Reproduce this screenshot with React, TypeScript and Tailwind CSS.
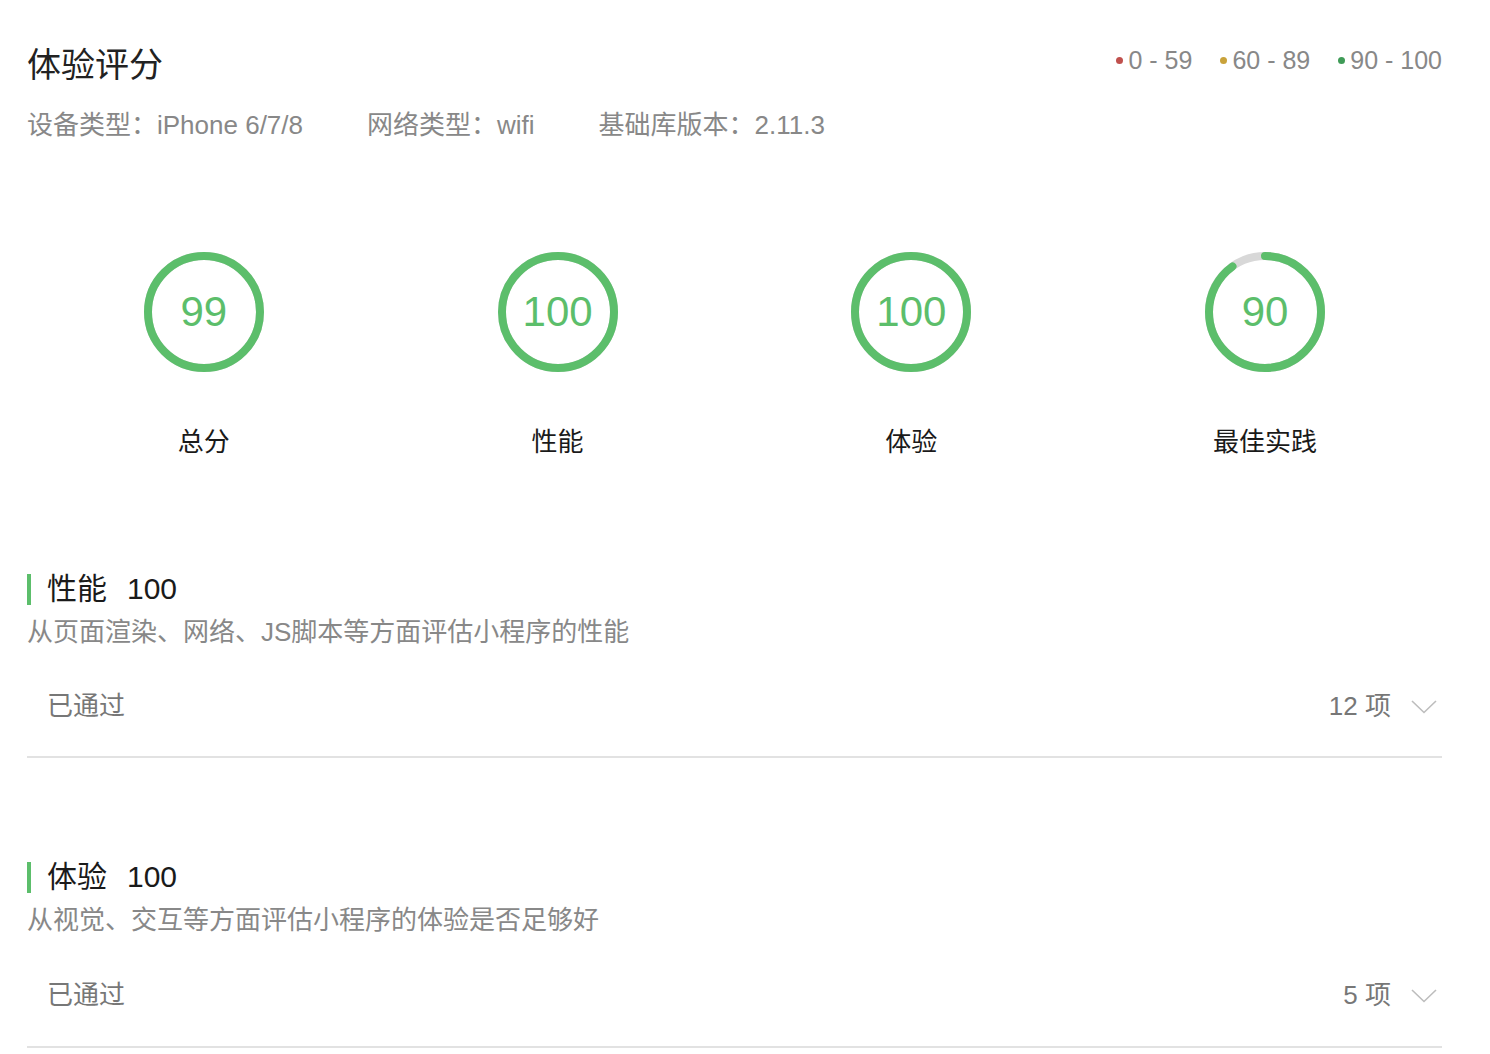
import React from "react";

const FONT = "font-['Liberation_Sans','Noto_Sans_CJK_SC',sans-serif]";

function Ring({ score }: { score: number }) {
  const r = 56;
  const c = 2 * Math.PI * r;
  const len = (score / 100) * c;
  return (
    <div className="relative h-[120px] w-[120px]">
      <svg width="120" height="120" viewBox="0 0 120 120" className="absolute inset-0">
        <circle cx="60" cy="60" r={r} fill="none" stroke="#d8d8d8" strokeWidth="8" />
        <circle
          cx="60"
          cy="60"
          r={r}
          fill="none"
          stroke="#5cbe6b"
          strokeWidth="8"
          strokeLinecap={score >= 99 ? "butt" : "round"}
          strokeDasharray={score >= 99 ? undefined : `${len} ${c}`}
          transform="rotate(-90 60 60)"
        />
      </svg>
      <div className="absolute inset-0 flex items-center justify-center text-[42px] leading-none text-[#5cbe6b]">
        {score}
      </div>
    </div>
  );
}

function Section({
  name,
  score,
  desc,
  count,
  className,
  rowClass,
}: {
  name: string;
  score: number;
  desc: string;
  count: string;
  className: string;
  rowClass: string;
}) {
  return (
    <div className={className}>
      <div className="flex items-center">
        <span className="h-[31px] w-[4px] bg-[#5cbe6b]" />
        <span className="ml-[16px] text-[30px] leading-[32px] text-[#1a1a1a]">
          {name}
          <span className="ml-[20px]">{score}</span>
        </span>
      </div>
      <p className="mt-[9px] text-[26px] leading-[36px] text-[#888]">{desc}</p>
      <div
        className={`flex items-center justify-between border-b-2 border-[#e2e2e2] pl-[20px] pr-[5px] pt-[6px] ${rowClass}`}
      >
        <span className="text-[26px] text-[#777]">已通过</span>
        <div className="flex items-center gap-[20px]">
          <span className="text-[26px] text-[#777]">{count}</span>
          <svg width="26" height="14" viewBox="0 0 26 14" className="mt-[2px]">
            <polyline points="1,1 13,12.5 25,1" fill="none" stroke="#bdbdbd" strokeWidth="1.6" />
          </svg>
        </div>
      </div>
    </div>
  );
}

export default function App() {
  const legend = [
    { dot: "bg-[#c0504d]", text: "0 - 59" },
    { dot: "bg-[#c9a23a]", text: "60 - 89" },
    { dot: "bg-[#3f9b57]", text: "90 - 100" },
  ];
  const rings = [
    { score: 99, label: "总分" },
    { score: 100, label: "性能" },
    { score: 100, label: "体验" },
    { score: 90, label: "最佳实践" },
  ];

  return (
    <div className={`${FONT} min-h-screen bg-white pl-[27px] pr-[48px] pt-[45px]`}>
      {/* header */}
      <div className="flex items-start justify-between">
        <h1 className="text-[34px] leading-[40px] text-[#222]">体验评分</h1>
        <div className="mt-[-3px] flex items-center gap-[28px] text-[25px] leading-[36px] text-[#888]">
          {legend.map((l) => (
            <div key={l.text} className="flex items-center">
              <span className={`mr-[5px] h-[7px] w-[7px] rounded-full ${l.dot}`} />
              {l.text}
            </div>
          ))}
        </div>
      </div>

      <div className="mt-[22px] flex gap-[64px] text-[26px] leading-[36px] text-[#888]">
        <span>设备类型：iPhone 6/7/8</span>
        <span>网络类型：wifi</span>
        <span>基础库版本：2.11.3</span>
      </div>

      {/* rings */}
      <div className="mt-[109px] grid grid-cols-4">
        {rings.map((r) => (
          <div key={r.label} className="flex flex-col items-center">
            <Ring score={r.score} />
            <span className="mt-[52px] text-[26px] leading-[36px] text-[#1a1a1a]">{r.label}</span>
          </div>
        ))}
      </div>

      <Section
        className="mt-[113px]"
        rowClass="h-[108px]"
        name="性能"
        score={100}
        desc="从页面渲染、网络、JS脚本等方面评估小程序的性能"
        count="12 项"
      />
      <Section
        className="mt-[103px]"
        rowClass="h-[110px]"
        name="体验"
        score={100}
        desc="从视觉、交互等方面评估小程序的体验是否足够好"
        count="5 项"
      />
    </div>
  );
}
